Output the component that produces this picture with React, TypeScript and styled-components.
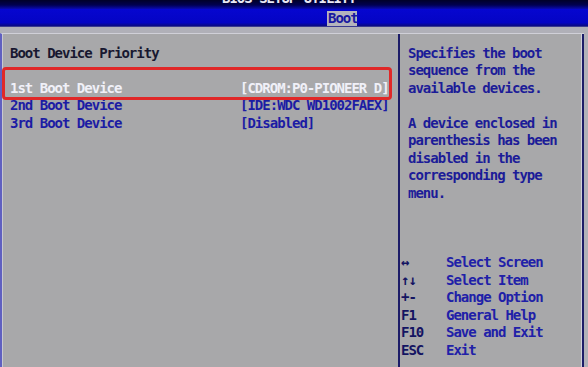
import { Fragment } from "react";
import styled, { createGlobalStyle } from "styled-components";

const GlobalStyle = createGlobalStyle`
  html, body {
    margin: 0;
    padding: 0;
    background: #b0b0b8;
  }
`;

const ROW = 17.45;

const Screen = styled.div`
  width: 588px;
  height: 367px;
  overflow: hidden;
  background: #b0b0b8;
  font-family: "DejaVu Sans Mono", "Liberation Mono", monospace;
  font-weight: bold;
  font-size: 14px;
  letter-spacing: -1px;
  line-height: ${ROW}px;
`;

const TitleBar = styled.div`
  height: 9px;
  overflow: hidden;
  background: linear-gradient(#000028, #000050 55%, #0a0ab0);
  padding-left: 222px;
`;

const Title = styled.div`
  margin-top: -10px;
  color: #e8e8f4;
  white-space: pre;
`;

const TabBar = styled.div`
  height: 17px;
  display: flex;
  align-items: flex-end;
  padding-left: 327px;
  background: linear-gradient(#0606d0, #0404c4 80%, #0a0a80);
  border-bottom: 1px solid #3a3a90;
`;

const Tab = styled.div`
  height: 15px;
  width: 29px;
  padding-left: 1px;
  background: #b4b4bc;
  color: #1818a0;
  line-height: 15px;
`;

const Body = styled.div`
  padding-top: 6px;
  width: 584px;
`;

const Frame = styled.div`
  display: grid;
  grid-template-columns: 396px 1fr;
  height: 340px;
  background: #a8a8aa;
  border-top: 1px solid #d0d0d8;
  border-left: 2px solid #6060c0;
  box-shadow: inset 1px 0 0 #c8c8d0;
`;

const LeftPanel = styled.div`
  position: relative;
  padding: 11px 0 0 8px;
`;

const Heading = styled.div`
  color: #181830;
  margin-bottom: ${ROW}px;
`;

const ItemRow = styled.div<{ $selected?: boolean }>`
  display: grid;
  grid-template-columns: 230px 1fr;
  white-space: pre;
  color: ${(p) => (p.$selected ? "#f0f0f8" : "#1c1ca4")};
`;

const Highlight = styled.div`
  position: absolute;
  left: 0px;
  top: 33px;
  width: 384px;
  height: 27px;
  border: 3px solid #e02828;
  border-radius: 4px;
`;

const RightPanel = styled.div`
  padding: 11px 0 0 8px;
  border-left: 2px solid #1c1c68;
  border-right: 2px solid #1c1c68;
  box-shadow: inset -1px 0 0 #d0d0dc;
  color: #1c1c98;
`;

const HelpLine = styled.div`
  white-space: pre;
  min-height: ${ROW}px;
`;

const Keys = styled.div`
  display: grid;
  grid-template-columns: 45px 1fr;
  margin-top: ${ROW * 3}px;
  margin-left: -7px;
`;

const KeyName = styled.div`
  color: #141462;
`;

const KeyAction = styled.div`
  color: #2020a8;
`;

const items = [
  { label: "1st Boot Device", value: "[CDROM:P0-PIONEER D]", selected: true },
  { label: "2nd Boot Device", value: "[IDE:WDC WD1002FAEX]" },
  { label: "3rd Boot Device", value: "[Disabled]" },
];

const help = [
  "Specifies the boot",
  "sequence from the",
  "available devices.",
  "",
  "A device enclosed in",
  "parenthesis has been",
  "disabled in the",
  "corresponding type",
  "menu.",
];

const keys = [
  ["↔", "Select Screen"],
  ["↑↓", "Select Item"],
  ["+-", "Change Option"],
  ["F1", "General Help"],
  ["F10", "Save and Exit"],
  ["ESC", "Exit"],
];

export default function App() {
  return (
    <Screen>
      <GlobalStyle />
      <TitleBar>
        <Title>BIOS SETUP UTILITY</Title>
      </TitleBar>
      <TabBar>
        <Tab>Boot</Tab>
      </TabBar>
      <Body>
        <Frame>
          <LeftPanel>
            <Heading>Boot Device Priority</Heading>
            {items.map((item) => (
              <ItemRow key={item.label} $selected={item.selected}>
                <span>{item.label}</span>
                <span>{item.value}</span>
              </ItemRow>
            ))}
            <Highlight />
          </LeftPanel>
          <RightPanel>
            {help.map((line, i) => (
              <HelpLine key={i}>{line}</HelpLine>
            ))}
            <Keys>
              {keys.map(([k, a]) => (
                <Fragment key={k}>
                  <KeyName>{k}</KeyName>
                  <KeyAction>{a}</KeyAction>
                </Fragment>
              ))}
            </Keys>
          </RightPanel>
        </Frame>
      </Body>
    </Screen>
  );
}
